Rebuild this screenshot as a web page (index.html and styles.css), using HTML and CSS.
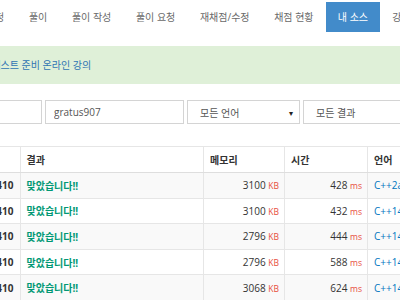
FILE: index.html
```html
<!DOCTYPE html>
<html lang="ko">
<head>
    <meta charset="UTF-8">
    <title>내 소스</title>
    <link rel="stylesheet" href="styles.css">
</head>
<body>
    <div class="wrap">
        <ul class="tabs">
            <li><a href="#">채점 설정</a></li>
            <li><a href="#">풀이</a></li>
            <li><a href="#">풀이 작성</a></li>
            <li><a href="#">풀이 요청</a></li>
            <li><a href="#">재채점/수정</a></li>
            <li><a href="#">채점 현황</a></li>
            <li class="active"><a href="#">내 소스</a></li>
            <li><a href="#">강의</a></li>
        </ul>

        <div class="alert">
            <a href="#">코딩테스트 준비 온라인 강의</a>
        </div>

        <div class="filters">
            <input class="field" type="text" value="" placeholder="">
            <input class="field" type="text" value="gratus907">
            <div class="select lang">모든 언어 <span class="caret">▾</span></div>
            <div class="select">모든 결과</div>
        </div>

        <table class="status">
            <colgroup>
                <col class="c-id">
                <col class="c-prob">
                <col class="c-result">
                <col class="c-mem">
                <col class="c-time">
                <col class="c-lang">
            </colgroup>
            <thead>
                <tr>
                    <th>아이디</th>
                    <th>문제</th>
                    <th>결과</th>
                    <th>메모리</th>
                    <th>시간</th>
                    <th>언어</th>
                </tr>
            </thead>
            <tbody>
                <tr>
                    <td>gratus907</td>
                    <td class="prob">17410</td>
                    <td class="ac">맞았습니다!!</td>
                    <td class="num">3100 <span class="unit">KB</span></td>
                    <td class="num">428 <span class="unit">ms</span></td>
                    <td class="lang-name">C++2a</td>
                </tr>
                <tr>
                    <td>gratus907</td>
                    <td class="prob">17410</td>
                    <td class="ac">맞았습니다!!</td>
                    <td class="num">3100 <span class="unit">KB</span></td>
                    <td class="num">432 <span class="unit">ms</span></td>
                    <td class="lang-name">C++14</td>
                </tr>
                <tr>
                    <td>gratus907</td>
                    <td class="prob">17410</td>
                    <td class="ac">맞았습니다!!</td>
                    <td class="num">2796 <span class="unit">KB</span></td>
                    <td class="num">444 <span class="unit">ms</span></td>
                    <td class="lang-name">C++14</td>
                </tr>
                <tr>
                    <td>gratus907</td>
                    <td class="prob">17410</td>
                    <td class="ac">맞았습니다!!</td>
                    <td class="num">2796 <span class="unit">KB</span></td>
                    <td class="num">588 <span class="unit">ms</span></td>
                    <td class="lang-name">C++14</td>
                </tr>
                <tr>
                    <td>gratus907</td>
                    <td class="prob">17410</td>
                    <td class="ac">맞았습니다!!</td>
                    <td class="num">3068 <span class="unit">KB</span></td>
                    <td class="num">624 <span class="unit">ms</span></td>
                    <td class="lang-name">C++14</td>
                </tr>
            </tbody>
        </table>
    </div>
</body>
</html>
```

FILE: styles.css
```css
* {
    box-sizing: border-box;
    margin: 0;
    padding: 0;
}

body {
    font-family: "Open Sans", "Noto Sans CJK KR", sans-serif;
    font-size: 10px;
    color: #333;
    background-color: #fff;
    overflow: hidden;
}

.wrap {
    width: 620px;
    margin-left: -100px;
}

.tabs {
    display: flex;
    list-style: none;
    margin-top: 2px;
    padding-left: 52.6px;
}

.tabs a {
    display: block;
    height: 30px;
    line-height: 30px;
    padding: 0 12.3px;
    color: #6a6a6a;
    text-decoration: none;
    white-space: nowrap;
}

.tabs .active a {
    background-color: #428bca;
    color: #fff;
    padding: 0 12px;
}

.alert {
    margin-top: 14px;
    height: 38px;
    line-height: 38px;
    padding-left: 73px;
    background-color: #dff0d8;
}

.alert a {
    color: #2f74b3;
    text-decoration: none;
}

.filters {
    display: flex;
    gap: 3px;
    margin-top: 16px;
    padding-left: 3px;
}

.field,
.select {
    height: 24px;
    border: 1px solid #d4d4d4;
    font-family: inherit;
    font-size: 10px;
    color: #555;
    background-color: #fff;
}

.field {
    width: 139px;
    padding: 0 8px;
    outline: none;
}

.select {
    display: flex;
    align-items: center;
    justify-content: space-between;
    width: 113px;
    padding: 0 6px 0 12px;
}

.caret {
    font-size: 8px;
    color: #222;
}

.status {
    margin-top: 22px;
    border-collapse: collapse;
    table-layout: fixed;
    width: 600px;
}

.c-id { width: 50px; }
.c-prob { width: 69.5px; }
.c-result { width: 183.5px; }
.c-mem { width: 81px; }
.c-time { width: 83px; }
.c-lang { width: 133px; }

.status th,
.status td {
    border: 1px solid #e6e6e6;
    padding: 0 6px;
    text-align: left;
    white-space: nowrap;
    overflow: hidden;
}

.status thead tr {
    height: 26px;
}

.status th {
    font-weight: 700;
    color: #333;
    border-bottom-color: #dedede;
}

.status tbody tr {
    height: 25.6px;
}

.status tbody tr:nth-child(odd) {
    background-color: #f9f9f9;
}

.status .prob {
    font-weight: 700;
    color: #333;
    text-align: right;
}

.ac {
    font-weight: 700;
    color: #009874;
}

.status .num {
    text-align: right;
    color: #333;
    padding-right: 5px;
}

.unit {
    font-size: 8.5px;
    color: #e74c3c;
}

.lang-name {
    color: #0076c0;
}
```
